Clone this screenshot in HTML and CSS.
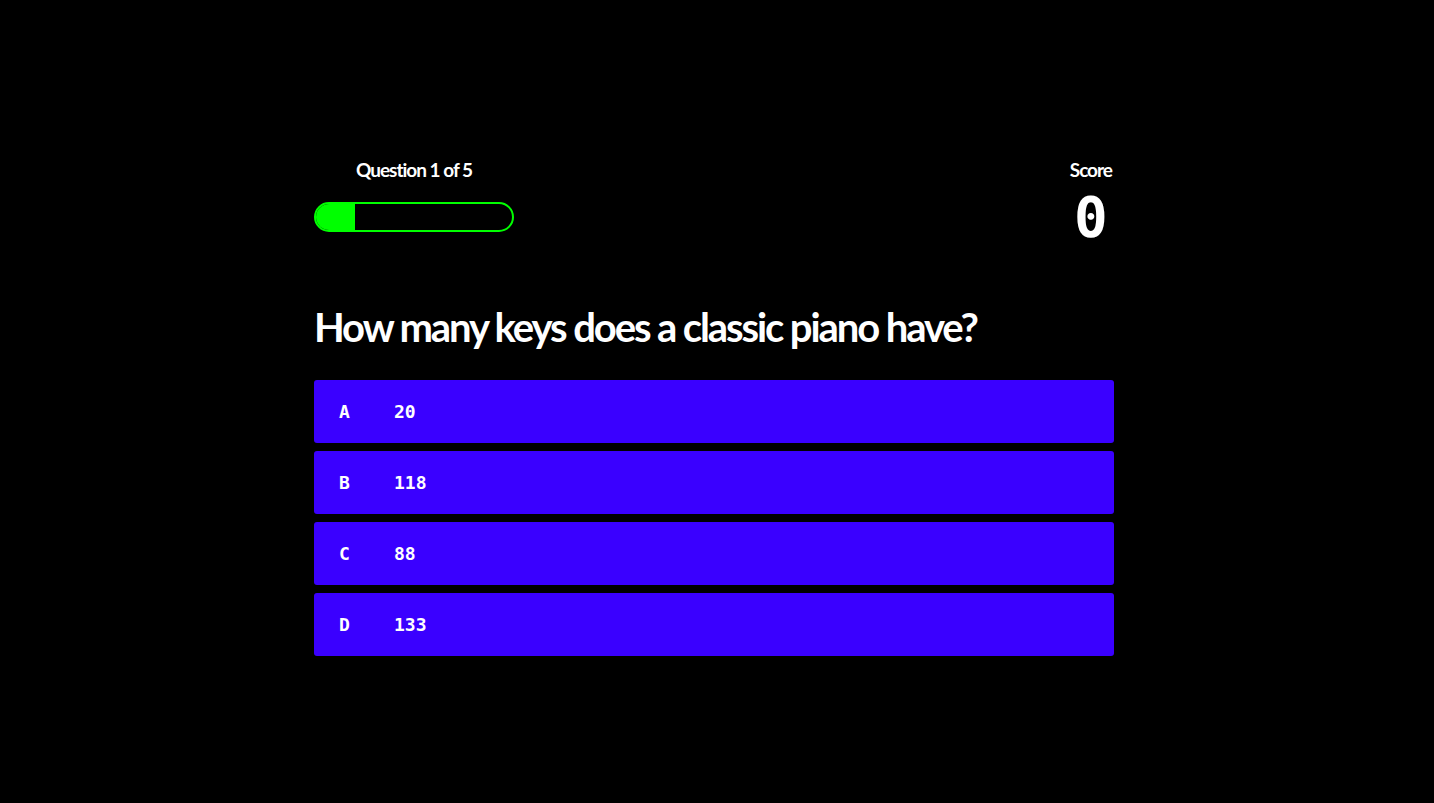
FILE: index.html
```html
<!DOCTYPE html>
<html>
<head>
<meta charset="utf-8">
<link rel="stylesheet" href="styles.css">
</head>
<body>
<main class="quiz">
  <header class="top">
    <div class="progress-block">
      <div class="progress-label">Question 1 of 5</div>
      <div class="progress-bar"><div class="progress-fill" style="width:20%"></div></div>
    </div>
    <div class="score-block">
      <div class="score-label">Score</div>
      <div class="score-value">0</div>
    </div>
  </header>
  <h1 class="question">How many keys does a classic piano have?</h1>
  <ul class="answers">
    <li class="answer"><span class="letter">A</span><span class="text">20</span></li>
    <li class="answer"><span class="letter">B</span><span class="text">118</span></li>
    <li class="answer"><span class="letter">C</span><span class="text">88</span></li>
    <li class="answer"><span class="letter">D</span><span class="text">133</span></li>
  </ul>
</main>
</body>
</html>
```

FILE: styles.css
```css
html, body {
  margin: 0;
  padding: 0;
  background: #000;
  color: #fff;
  font-family: "Lato", "Noto Sans", sans-serif;
}
body {
  padding-right: 6px;
}
.quiz {
  width: 800px;
  margin: 0 auto;
  padding-top: 156px;
}
.top {
  display: flex;
  justify-content: space-between;
  align-items: flex-start;
}
.progress-block {
  width: 200px;
  display: flex;
  flex-direction: column;
  align-items: center;
}
.progress-label, .score-label {
  font-size: 19px;
  font-weight: 700;
  letter-spacing: -1px;
  line-height: 28px;
}
.progress-bar {
  margin-top: 18px;
  width: 200px;
  height: 30px;
  box-sizing: border-box;
  border: 2px solid #00ff00;
  border-radius: 15px;
  overflow: hidden;
}
.progress-fill {
  height: 100%;
  background: #00ff00;
}
.score-block {
  display: flex;
  flex-direction: column;
  align-items: center;
  margin-right: 2px;
}
.score-value {
  font-family: "DejaVu Sans Mono", monospace;
  font-weight: 700;
  font-size: 56px;
  line-height: 60px;
  margin-top: 3px;
}
.question {
  margin: 52px 0 0;
  font-size: 40px;
  font-weight: 700;
  letter-spacing: -2.1px;
  line-height: 56px;
}
.answers {
  list-style: none;
  margin: 25px 0 0;
  padding: 0;
  display: flex;
  flex-direction: column;
  gap: 8px;
}
.answer {
  height: 63px;
  background: #3a00ff;
  border-radius: 3px;
  display: flex;
  align-items: center;
  padding-left: 25px;
  font-family: "DejaVu Sans Mono", monospace;
  font-weight: 700;
  font-size: 18px;
}
.letter {
  width: 55px;
}
```
